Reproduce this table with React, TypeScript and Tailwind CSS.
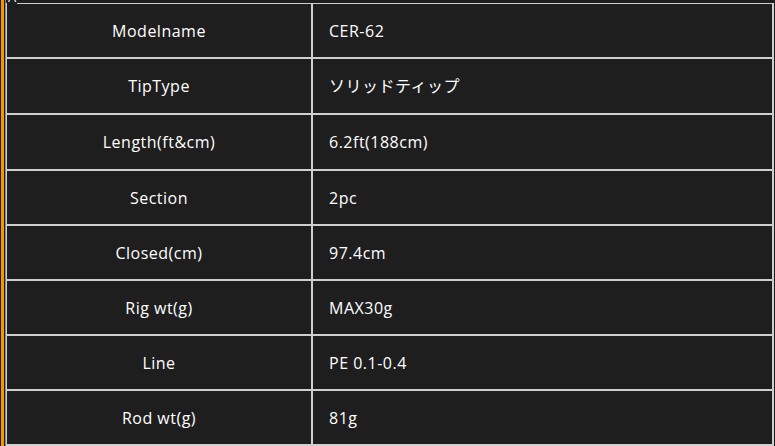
import React from "react";

const rows: [string, string, string][] = [
  ["Modelname", "CER-62", "h-[55px]"],
  ["TipType", "ソリッドティップ", "h-[56px]"],
  ["Length(ft&cm)", "6.2ft(188cm)", "h-[56px]"],
  ["Section", "2pc", "h-[55px]"],
  ["Closed(cm)", "97.4cm", "h-[55px]"],
  ["Rig wt(g)", "MAX30g", "h-[55px]"],
  ["Line", "PE 0.1-0.4", "h-[55px]"],
  ["Rod wt(g)", "81g", "h-[55px]"],
];

export default function App() {
  return (
    <div
      className="relative flex h-[446px] w-[775px] overflow-hidden bg-[#1e1e1e] text-white"
      style={{ fontFamily: '"Open Sans", "Noto Sans CJK JP", sans-serif' }}
    >
      <div className="ml-[1px] w-[3px] shrink-0 bg-[#f39800]" />
      <div className="ml-[1px] w-[1px] shrink-0 bg-[#8a8a8a]" />
      <div className="mt-[3px] w-[768px] shrink-0 border-t border-r-2 border-l border-[#cfcfcf]">
        {rows.map(([k, v, h]) => (
          <div key={k} className={`flex ${h} border-b-2 border-[#cfcfcf]`}>
            <div className="flex w-[306px] shrink-0 items-center justify-center border-r-2 border-[#cfcfcf] text-[16px] tracking-[0.5px]">
              {k}
            </div>
            <div className="flex flex-1 items-center pl-[16px] text-[16px] tracking-[0.5px]">{v}</div>
          </div>
        ))}
      </div>
      <span className="absolute left-[7px] top-[-9px] bg-[#1e1e1e] px-[1px] text-[13px] leading-[13px] text-white">
        A
      </span>
    </div>
  );
}
